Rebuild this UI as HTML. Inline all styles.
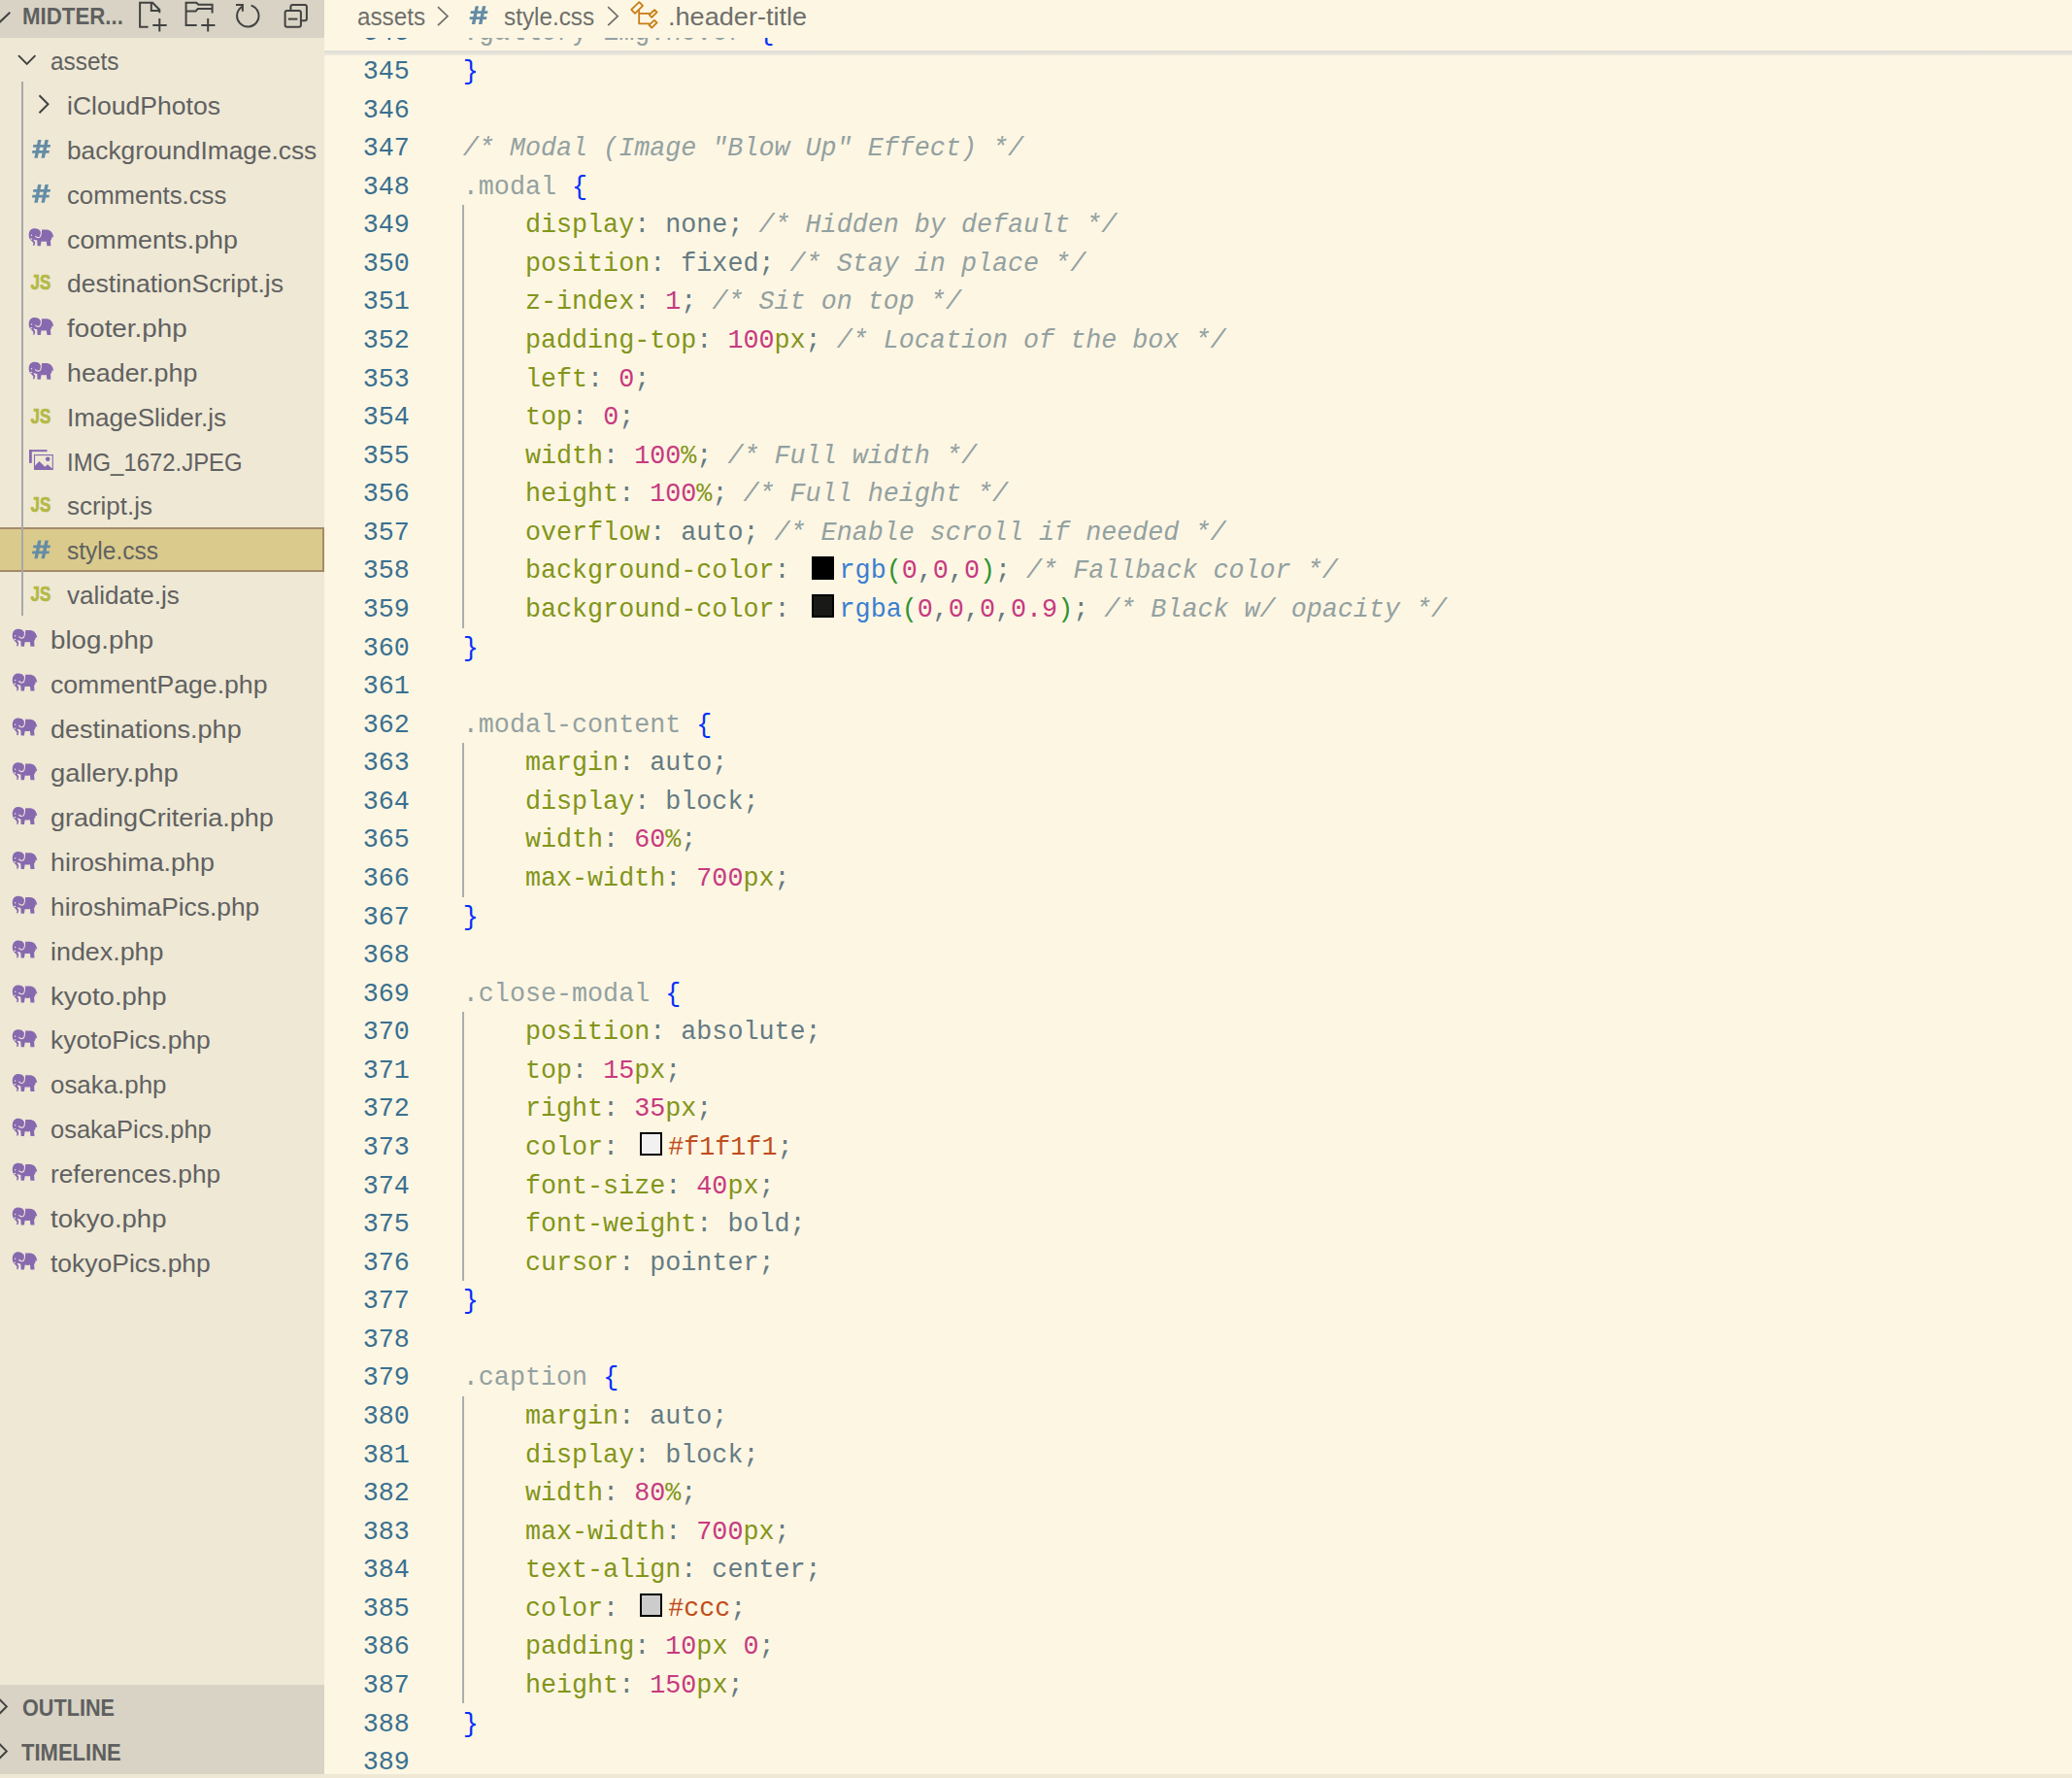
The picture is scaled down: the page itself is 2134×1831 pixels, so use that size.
<!DOCTYPE html><html><head><meta charset="utf-8"><style>

*{box-sizing:border-box}
html,body{margin:0;padding:0}
body{width:2134px;height:1831px;overflow:hidden;position:relative;background:#FDF6E3;font-family:"Liberation Sans",sans-serif}
.a{position:absolute}
.t{position:absolute;white-space:pre;transform-origin:0 0}
.cl{position:absolute;left:476.80px;white-space:pre;font-family:"Liberation Mono",monospace;font-size:26.7293px;line-height:39.57px;height:39.57px;color:#657B83}
.ln{position:absolute;left:334px;width:87.80px;white-space:pre;font-family:"Liberation Mono",monospace;font-size:26.7293px;line-height:39.57px;color:#3A7090;text-align:right}
.c{color:#93A1A1;font-style:italic}
.p{color:#82951A}
.n{color:#C73A80}
.u{color:#82951A}
.s{color:#93A1A1}
.b{color:#0431FA}
.q{color:#319331}
.f{color:#3B7FD0}
.h{color:#C04D1C}
.tg{color:#268BD2}
.sw{display:inline-block;vertical-align:top;width:23px;height:24px;border:2px solid #000;margin:3.20px 6px 0 6px}
svg{position:absolute;left:0;top:0;overflow:visible}

</style></head><body>
<div class="a" style="left:0;top:0;width:334px;height:1827px;background:#EEE8D5;overflow:hidden">
<div class="a" style="left:0;top:0;width:334px;height:38.58px;background:#D8D3C4"></div>
<div class="t" style="left:23.40px;top:-3.00px;font-size:23.50px;line-height:40px;color:#5F5F5F;font-weight:bold;transform:scaleX(0.9468);">MIDTER...</div>
<div class="a" style="left:-2px;top:543.00px;width:336px;height:46.06px;background:#DACB8C;border:2px solid #A58A69"></div>
<div class="a" style="left:22px;top:84.41px;width:2px;height:549.96px;background:#A9A9A9"></div>
<div class="t" style="left:51.50px;top:43.18px;font-size:26.50px;line-height:40px;color:#616161;transform:scaleX(0.9192);">assets</div>
<div class="t" style="left:68.60px;top:89.01px;font-size:26.50px;line-height:40px;color:#616161;transform:scaleX(1.0021);">iCloudPhotos</div>
<div class="t" style="left:68.60px;top:134.84px;font-size:26.50px;line-height:40px;color:#616161;transform:scaleX(0.9923);">backgroundImage.css</div>
<div class="t" style="left:68.60px;top:180.67px;font-size:26.50px;line-height:40px;color:#616161;transform:scaleX(0.9703);">comments.css</div>
<div class="t" style="left:68.60px;top:226.50px;font-size:26.50px;line-height:40px;color:#616161;transform:scaleX(1.0124);">comments.php</div>
<div class="t" style="left:68.60px;top:272.33px;font-size:26.50px;line-height:40px;color:#616161;transform:scaleX(1.0024);">destinationScript.js</div>
<div class="t" style="left:68.60px;top:318.16px;font-size:26.50px;line-height:40px;color:#616161;transform:scaleX(1.0490);">footer.php</div>
<div class="t" style="left:68.60px;top:363.99px;font-size:26.50px;line-height:40px;color:#616161;transform:scaleX(1.0126);">header.php</div>
<div class="t" style="left:68.60px;top:409.82px;font-size:26.50px;line-height:40px;color:#616161;transform:scaleX(0.9861);">ImageSlider.js</div>
<div class="t" style="left:68.60px;top:455.65px;font-size:26.50px;line-height:40px;color:#616161;transform:scaleX(0.9015);">IMG_1672.JPEG</div>
<div class="t" style="left:68.60px;top:501.48px;font-size:26.50px;line-height:40px;color:#616161;transform:scaleX(0.9785);">script.js</div>
<div class="t" style="left:68.60px;top:547.31px;font-size:26.50px;line-height:40px;color:#616161;transform:scaleX(0.9259);">style.css</div>
<div class="t" style="left:68.60px;top:593.14px;font-size:26.50px;line-height:40px;color:#616161;transform:scaleX(0.9822);">validate.js</div>
<div class="t" style="left:51.50px;top:638.97px;font-size:26.50px;line-height:40px;color:#616161;transform:scaleX(1.0440);">blog.php</div>
<div class="t" style="left:51.50px;top:684.80px;font-size:26.50px;line-height:40px;color:#616161;transform:scaleX(1.0046);">commentPage.php</div>
<div class="t" style="left:51.50px;top:730.63px;font-size:26.50px;line-height:40px;color:#616161;transform:scaleX(1.0189);">destinations.php</div>
<div class="t" style="left:51.50px;top:776.46px;font-size:26.50px;line-height:40px;color:#616161;transform:scaleX(1.0319);">gallery.php</div>
<div class="t" style="left:51.50px;top:822.29px;font-size:26.50px;line-height:40px;color:#616161;transform:scaleX(1.0196);">gradingCriteria.php</div>
<div class="t" style="left:51.50px;top:868.12px;font-size:26.50px;line-height:40px;color:#616161;transform:scaleX(1.0149);">hiroshima.php</div>
<div class="t" style="left:51.50px;top:913.95px;font-size:26.50px;line-height:40px;color:#616161;transform:scaleX(0.9940);">hiroshimaPics.php</div>
<div class="t" style="left:51.50px;top:959.78px;font-size:26.50px;line-height:40px;color:#616161;transform:scaleX(1.0133);">index.php</div>
<div class="t" style="left:51.50px;top:1005.61px;font-size:26.50px;line-height:40px;color:#616161;transform:scaleX(1.0402);">kyoto.php</div>
<div class="t" style="left:51.50px;top:1051.44px;font-size:26.50px;line-height:40px;color:#616161;transform:scaleX(0.9990);">kyotoPics.php</div>
<div class="t" style="left:51.50px;top:1097.27px;font-size:26.50px;line-height:40px;color:#616161;transform:scaleX(0.9771);">osaka.php</div>
<div class="t" style="left:51.50px;top:1143.10px;font-size:26.50px;line-height:40px;color:#616161;transform:scaleX(0.9618);">osakaPics.php</div>
<div class="t" style="left:51.50px;top:1188.93px;font-size:26.50px;line-height:40px;color:#616161;transform:scaleX(0.9906);">references.php</div>
<div class="t" style="left:51.50px;top:1234.76px;font-size:26.50px;line-height:40px;color:#616161;transform:scaleX(1.0402);">tokyo.php</div>
<div class="t" style="left:51.50px;top:1280.59px;font-size:26.50px;line-height:40px;color:#616161;transform:scaleX(0.9990);">tokyoPics.php</div>
<svg width="334" height="1827"><path d="M19 57.1 L27.7 65.9 L36.4 57.1" fill="none" stroke="#424242" stroke-width="2"/><path d="M40.5 98.3 L49.5 107.3 L40.5 116.3" fill="none" stroke="#424242" stroke-width="2"/><g fill="#648CA5" transform="translate(28.00 140.00)"><path d="M11.1 4.05 L14.5 4.05 L10.8 22.8 L7.3 22.8 Z"/><path d="M18.4 4.05 L21.9 4.05 L17.9 22.8 L14.5 22.8 Z"/><path d="M6.4 9.1 L24 9.1 L23.6 11.8 L6 11.8 Z"/><path d="M5.4 15 L22.9 15 L22.5 17.7 L5 17.7 Z"/></g><g fill="#648CA5" transform="translate(28.00 185.83)"><path d="M11.1 4.05 L14.5 4.05 L10.8 22.8 L7.3 22.8 Z"/><path d="M18.4 4.05 L21.9 4.05 L17.9 22.8 L14.5 22.8 Z"/><path d="M6.4 9.1 L24 9.1 L23.6 11.8 L6 11.8 Z"/><path d="M5.4 15 L22.9 15 L22.5 17.7 L5 17.7 Z"/></g><g transform="translate(24.00 228.31)"><path fill="#8769AF" d="M6.6 17.8 C5.2 15 5.4 10.2 7.8 8.3 C9.6 6.8 12.6 6.6 14.8 7.5 C16.3 8.1 17.2 9.2 17.6 10.5 L18.3 8.2 L24 8.2 C28.2 8.4 30.3 11.4 31.2 15.8 L30.4 16 L29.8 15 C29.6 17 28.8 18.5 28 19.5 L28.4 25 L24.4 25 L23.8 20.2 C22.5 20.6 20.4 20.6 18.6 20.2 L17.8 25 L14.6 25 L14.2 19.3 C12.5 18.8 11 18.6 10.2 18.4 L12.1 21 C12.3 22.6 11.8 24 11.1 24.8 L9.8 24.4 C10.4 23.5 10.6 22.6 10.3 21.8 L6.6 17.8 Z"/><path fill="none" stroke="#EEE8D5" stroke-width="1.1" d="M12.4 14.6 C13 16.4 15.5 16.8 17 15.8 C18.2 15 18.5 13 18.5 8"/><circle cx="8.5" cy="13.9" r="0.75" fill="#EEE8D5"/><ellipse cx="8.3" cy="17.7" rx="1" ry="0.7" fill="#EEE8D5"/></g><text x="31.6" y="298.0" font-family="Liberation Sans" font-weight="bold" font-size="22" fill="#B4B946" stroke="#B4B946" stroke-width="0.7" textLength="20.7" lengthAdjust="spacingAndGlyphs">JS</text><g transform="translate(24.00 319.98)"><path fill="#8769AF" d="M6.6 17.8 C5.2 15 5.4 10.2 7.8 8.3 C9.6 6.8 12.6 6.6 14.8 7.5 C16.3 8.1 17.2 9.2 17.6 10.5 L18.3 8.2 L24 8.2 C28.2 8.4 30.3 11.4 31.2 15.8 L30.4 16 L29.8 15 C29.6 17 28.8 18.5 28 19.5 L28.4 25 L24.4 25 L23.8 20.2 C22.5 20.6 20.4 20.6 18.6 20.2 L17.8 25 L14.6 25 L14.2 19.3 C12.5 18.8 11 18.6 10.2 18.4 L12.1 21 C12.3 22.6 11.8 24 11.1 24.8 L9.8 24.4 C10.4 23.5 10.6 22.6 10.3 21.8 L6.6 17.8 Z"/><path fill="none" stroke="#EEE8D5" stroke-width="1.1" d="M12.4 14.6 C13 16.4 15.5 16.8 17 15.8 C18.2 15 18.5 13 18.5 8"/><circle cx="8.5" cy="13.9" r="0.75" fill="#EEE8D5"/><ellipse cx="8.3" cy="17.7" rx="1" ry="0.7" fill="#EEE8D5"/></g><g transform="translate(24.00 365.81)"><path fill="#8769AF" d="M6.6 17.8 C5.2 15 5.4 10.2 7.8 8.3 C9.6 6.8 12.6 6.6 14.8 7.5 C16.3 8.1 17.2 9.2 17.6 10.5 L18.3 8.2 L24 8.2 C28.2 8.4 30.3 11.4 31.2 15.8 L30.4 16 L29.8 15 C29.6 17 28.8 18.5 28 19.5 L28.4 25 L24.4 25 L23.8 20.2 C22.5 20.6 20.4 20.6 18.6 20.2 L17.8 25 L14.6 25 L14.2 19.3 C12.5 18.8 11 18.6 10.2 18.4 L12.1 21 C12.3 22.6 11.8 24 11.1 24.8 L9.8 24.4 C10.4 23.5 10.6 22.6 10.3 21.8 L6.6 17.8 Z"/><path fill="none" stroke="#EEE8D5" stroke-width="1.1" d="M12.4 14.6 C13 16.4 15.5 16.8 17 15.8 C18.2 15 18.5 13 18.5 8"/><circle cx="8.5" cy="13.9" r="0.75" fill="#EEE8D5"/><ellipse cx="8.3" cy="17.7" rx="1" ry="0.7" fill="#EEE8D5"/></g><text x="31.6" y="435.5" font-family="Liberation Sans" font-weight="bold" font-size="22" fill="#B4B946" stroke="#B4B946" stroke-width="0.7" textLength="20.7" lengthAdjust="spacingAndGlyphs">JS</text><g transform="translate(26.00 458.16)" fill="#8769AF"><rect x="4" y="5" width="18.5" height="2"/><rect x="4" y="5" width="2.8" height="13.7"/><rect x="9.5" y="10.4" width="18.8" height="14.8" fill="none" stroke="#8769AF" stroke-width="1.1"/><path d="M9.5 22.1 L14.4 16.9 L20.3 22.7 L23 20 L28.3 24.8 L28.3 25.7 L9.5 25.7 Z"/><circle cx="23.2" cy="14.6" r="2.3"/></g><text x="31.6" y="527.2" font-family="Liberation Sans" font-weight="bold" font-size="22" fill="#B4B946" stroke="#B4B946" stroke-width="0.7" textLength="20.7" lengthAdjust="spacingAndGlyphs">JS</text><g fill="#648CA5" transform="translate(28.00 552.48)"><path d="M11.1 4.05 L14.5 4.05 L10.8 22.8 L7.3 22.8 Z"/><path d="M18.4 4.05 L21.9 4.05 L17.9 22.8 L14.5 22.8 Z"/><path d="M6.4 9.1 L24 9.1 L23.6 11.8 L6 11.8 Z"/><path d="M5.4 15 L22.9 15 L22.5 17.7 L5 17.7 Z"/></g><text x="31.6" y="618.9" font-family="Liberation Sans" font-weight="bold" font-size="22" fill="#B4B946" stroke="#B4B946" stroke-width="0.7" textLength="20.7" lengthAdjust="spacingAndGlyphs">JS</text><g transform="translate(7.10 640.78)"><path fill="#8769AF" d="M6.6 17.8 C5.2 15 5.4 10.2 7.8 8.3 C9.6 6.8 12.6 6.6 14.8 7.5 C16.3 8.1 17.2 9.2 17.6 10.5 L18.3 8.2 L24 8.2 C28.2 8.4 30.3 11.4 31.2 15.8 L30.4 16 L29.8 15 C29.6 17 28.8 18.5 28 19.5 L28.4 25 L24.4 25 L23.8 20.2 C22.5 20.6 20.4 20.6 18.6 20.2 L17.8 25 L14.6 25 L14.2 19.3 C12.5 18.8 11 18.6 10.2 18.4 L12.1 21 C12.3 22.6 11.8 24 11.1 24.8 L9.8 24.4 C10.4 23.5 10.6 22.6 10.3 21.8 L6.6 17.8 Z"/><path fill="none" stroke="#EEE8D5" stroke-width="1.1" d="M12.4 14.6 C13 16.4 15.5 16.8 17 15.8 C18.2 15 18.5 13 18.5 8"/><circle cx="8.5" cy="13.9" r="0.75" fill="#EEE8D5"/><ellipse cx="8.3" cy="17.7" rx="1" ry="0.7" fill="#EEE8D5"/></g><g transform="translate(7.10 686.62)"><path fill="#8769AF" d="M6.6 17.8 C5.2 15 5.4 10.2 7.8 8.3 C9.6 6.8 12.6 6.6 14.8 7.5 C16.3 8.1 17.2 9.2 17.6 10.5 L18.3 8.2 L24 8.2 C28.2 8.4 30.3 11.4 31.2 15.8 L30.4 16 L29.8 15 C29.6 17 28.8 18.5 28 19.5 L28.4 25 L24.4 25 L23.8 20.2 C22.5 20.6 20.4 20.6 18.6 20.2 L17.8 25 L14.6 25 L14.2 19.3 C12.5 18.8 11 18.6 10.2 18.4 L12.1 21 C12.3 22.6 11.8 24 11.1 24.8 L9.8 24.4 C10.4 23.5 10.6 22.6 10.3 21.8 L6.6 17.8 Z"/><path fill="none" stroke="#EEE8D5" stroke-width="1.1" d="M12.4 14.6 C13 16.4 15.5 16.8 17 15.8 C18.2 15 18.5 13 18.5 8"/><circle cx="8.5" cy="13.9" r="0.75" fill="#EEE8D5"/><ellipse cx="8.3" cy="17.7" rx="1" ry="0.7" fill="#EEE8D5"/></g><g transform="translate(7.10 732.44)"><path fill="#8769AF" d="M6.6 17.8 C5.2 15 5.4 10.2 7.8 8.3 C9.6 6.8 12.6 6.6 14.8 7.5 C16.3 8.1 17.2 9.2 17.6 10.5 L18.3 8.2 L24 8.2 C28.2 8.4 30.3 11.4 31.2 15.8 L30.4 16 L29.8 15 C29.6 17 28.8 18.5 28 19.5 L28.4 25 L24.4 25 L23.8 20.2 C22.5 20.6 20.4 20.6 18.6 20.2 L17.8 25 L14.6 25 L14.2 19.3 C12.5 18.8 11 18.6 10.2 18.4 L12.1 21 C12.3 22.6 11.8 24 11.1 24.8 L9.8 24.4 C10.4 23.5 10.6 22.6 10.3 21.8 L6.6 17.8 Z"/><path fill="none" stroke="#EEE8D5" stroke-width="1.1" d="M12.4 14.6 C13 16.4 15.5 16.8 17 15.8 C18.2 15 18.5 13 18.5 8"/><circle cx="8.5" cy="13.9" r="0.75" fill="#EEE8D5"/><ellipse cx="8.3" cy="17.7" rx="1" ry="0.7" fill="#EEE8D5"/></g><g transform="translate(7.10 778.27)"><path fill="#8769AF" d="M6.6 17.8 C5.2 15 5.4 10.2 7.8 8.3 C9.6 6.8 12.6 6.6 14.8 7.5 C16.3 8.1 17.2 9.2 17.6 10.5 L18.3 8.2 L24 8.2 C28.2 8.4 30.3 11.4 31.2 15.8 L30.4 16 L29.8 15 C29.6 17 28.8 18.5 28 19.5 L28.4 25 L24.4 25 L23.8 20.2 C22.5 20.6 20.4 20.6 18.6 20.2 L17.8 25 L14.6 25 L14.2 19.3 C12.5 18.8 11 18.6 10.2 18.4 L12.1 21 C12.3 22.6 11.8 24 11.1 24.8 L9.8 24.4 C10.4 23.5 10.6 22.6 10.3 21.8 L6.6 17.8 Z"/><path fill="none" stroke="#EEE8D5" stroke-width="1.1" d="M12.4 14.6 C13 16.4 15.5 16.8 17 15.8 C18.2 15 18.5 13 18.5 8"/><circle cx="8.5" cy="13.9" r="0.75" fill="#EEE8D5"/><ellipse cx="8.3" cy="17.7" rx="1" ry="0.7" fill="#EEE8D5"/></g><g transform="translate(7.10 824.11)"><path fill="#8769AF" d="M6.6 17.8 C5.2 15 5.4 10.2 7.8 8.3 C9.6 6.8 12.6 6.6 14.8 7.5 C16.3 8.1 17.2 9.2 17.6 10.5 L18.3 8.2 L24 8.2 C28.2 8.4 30.3 11.4 31.2 15.8 L30.4 16 L29.8 15 C29.6 17 28.8 18.5 28 19.5 L28.4 25 L24.4 25 L23.8 20.2 C22.5 20.6 20.4 20.6 18.6 20.2 L17.8 25 L14.6 25 L14.2 19.3 C12.5 18.8 11 18.6 10.2 18.4 L12.1 21 C12.3 22.6 11.8 24 11.1 24.8 L9.8 24.4 C10.4 23.5 10.6 22.6 10.3 21.8 L6.6 17.8 Z"/><path fill="none" stroke="#EEE8D5" stroke-width="1.1" d="M12.4 14.6 C13 16.4 15.5 16.8 17 15.8 C18.2 15 18.5 13 18.5 8"/><circle cx="8.5" cy="13.9" r="0.75" fill="#EEE8D5"/><ellipse cx="8.3" cy="17.7" rx="1" ry="0.7" fill="#EEE8D5"/></g><g transform="translate(7.10 869.93)"><path fill="#8769AF" d="M6.6 17.8 C5.2 15 5.4 10.2 7.8 8.3 C9.6 6.8 12.6 6.6 14.8 7.5 C16.3 8.1 17.2 9.2 17.6 10.5 L18.3 8.2 L24 8.2 C28.2 8.4 30.3 11.4 31.2 15.8 L30.4 16 L29.8 15 C29.6 17 28.8 18.5 28 19.5 L28.4 25 L24.4 25 L23.8 20.2 C22.5 20.6 20.4 20.6 18.6 20.2 L17.8 25 L14.6 25 L14.2 19.3 C12.5 18.8 11 18.6 10.2 18.4 L12.1 21 C12.3 22.6 11.8 24 11.1 24.8 L9.8 24.4 C10.4 23.5 10.6 22.6 10.3 21.8 L6.6 17.8 Z"/><path fill="none" stroke="#EEE8D5" stroke-width="1.1" d="M12.4 14.6 C13 16.4 15.5 16.8 17 15.8 C18.2 15 18.5 13 18.5 8"/><circle cx="8.5" cy="13.9" r="0.75" fill="#EEE8D5"/><ellipse cx="8.3" cy="17.7" rx="1" ry="0.7" fill="#EEE8D5"/></g><g transform="translate(7.10 915.76)"><path fill="#8769AF" d="M6.6 17.8 C5.2 15 5.4 10.2 7.8 8.3 C9.6 6.8 12.6 6.6 14.8 7.5 C16.3 8.1 17.2 9.2 17.6 10.5 L18.3 8.2 L24 8.2 C28.2 8.4 30.3 11.4 31.2 15.8 L30.4 16 L29.8 15 C29.6 17 28.8 18.5 28 19.5 L28.4 25 L24.4 25 L23.8 20.2 C22.5 20.6 20.4 20.6 18.6 20.2 L17.8 25 L14.6 25 L14.2 19.3 C12.5 18.8 11 18.6 10.2 18.4 L12.1 21 C12.3 22.6 11.8 24 11.1 24.8 L9.8 24.4 C10.4 23.5 10.6 22.6 10.3 21.8 L6.6 17.8 Z"/><path fill="none" stroke="#EEE8D5" stroke-width="1.1" d="M12.4 14.6 C13 16.4 15.5 16.8 17 15.8 C18.2 15 18.5 13 18.5 8"/><circle cx="8.5" cy="13.9" r="0.75" fill="#EEE8D5"/><ellipse cx="8.3" cy="17.7" rx="1" ry="0.7" fill="#EEE8D5"/></g><g transform="translate(7.10 961.59)"><path fill="#8769AF" d="M6.6 17.8 C5.2 15 5.4 10.2 7.8 8.3 C9.6 6.8 12.6 6.6 14.8 7.5 C16.3 8.1 17.2 9.2 17.6 10.5 L18.3 8.2 L24 8.2 C28.2 8.4 30.3 11.4 31.2 15.8 L30.4 16 L29.8 15 C29.6 17 28.8 18.5 28 19.5 L28.4 25 L24.4 25 L23.8 20.2 C22.5 20.6 20.4 20.6 18.6 20.2 L17.8 25 L14.6 25 L14.2 19.3 C12.5 18.8 11 18.6 10.2 18.4 L12.1 21 C12.3 22.6 11.8 24 11.1 24.8 L9.8 24.4 C10.4 23.5 10.6 22.6 10.3 21.8 L6.6 17.8 Z"/><path fill="none" stroke="#EEE8D5" stroke-width="1.1" d="M12.4 14.6 C13 16.4 15.5 16.8 17 15.8 C18.2 15 18.5 13 18.5 8"/><circle cx="8.5" cy="13.9" r="0.75" fill="#EEE8D5"/><ellipse cx="8.3" cy="17.7" rx="1" ry="0.7" fill="#EEE8D5"/></g><g transform="translate(7.10 1007.42)"><path fill="#8769AF" d="M6.6 17.8 C5.2 15 5.4 10.2 7.8 8.3 C9.6 6.8 12.6 6.6 14.8 7.5 C16.3 8.1 17.2 9.2 17.6 10.5 L18.3 8.2 L24 8.2 C28.2 8.4 30.3 11.4 31.2 15.8 L30.4 16 L29.8 15 C29.6 17 28.8 18.5 28 19.5 L28.4 25 L24.4 25 L23.8 20.2 C22.5 20.6 20.4 20.6 18.6 20.2 L17.8 25 L14.6 25 L14.2 19.3 C12.5 18.8 11 18.6 10.2 18.4 L12.1 21 C12.3 22.6 11.8 24 11.1 24.8 L9.8 24.4 C10.4 23.5 10.6 22.6 10.3 21.8 L6.6 17.8 Z"/><path fill="none" stroke="#EEE8D5" stroke-width="1.1" d="M12.4 14.6 C13 16.4 15.5 16.8 17 15.8 C18.2 15 18.5 13 18.5 8"/><circle cx="8.5" cy="13.9" r="0.75" fill="#EEE8D5"/><ellipse cx="8.3" cy="17.7" rx="1" ry="0.7" fill="#EEE8D5"/></g><g transform="translate(7.10 1053.25)"><path fill="#8769AF" d="M6.6 17.8 C5.2 15 5.4 10.2 7.8 8.3 C9.6 6.8 12.6 6.6 14.8 7.5 C16.3 8.1 17.2 9.2 17.6 10.5 L18.3 8.2 L24 8.2 C28.2 8.4 30.3 11.4 31.2 15.8 L30.4 16 L29.8 15 C29.6 17 28.8 18.5 28 19.5 L28.4 25 L24.4 25 L23.8 20.2 C22.5 20.6 20.4 20.6 18.6 20.2 L17.8 25 L14.6 25 L14.2 19.3 C12.5 18.8 11 18.6 10.2 18.4 L12.1 21 C12.3 22.6 11.8 24 11.1 24.8 L9.8 24.4 C10.4 23.5 10.6 22.6 10.3 21.8 L6.6 17.8 Z"/><path fill="none" stroke="#EEE8D5" stroke-width="1.1" d="M12.4 14.6 C13 16.4 15.5 16.8 17 15.8 C18.2 15 18.5 13 18.5 8"/><circle cx="8.5" cy="13.9" r="0.75" fill="#EEE8D5"/><ellipse cx="8.3" cy="17.7" rx="1" ry="0.7" fill="#EEE8D5"/></g><g transform="translate(7.10 1099.08)"><path fill="#8769AF" d="M6.6 17.8 C5.2 15 5.4 10.2 7.8 8.3 C9.6 6.8 12.6 6.6 14.8 7.5 C16.3 8.1 17.2 9.2 17.6 10.5 L18.3 8.2 L24 8.2 C28.2 8.4 30.3 11.4 31.2 15.8 L30.4 16 L29.8 15 C29.6 17 28.8 18.5 28 19.5 L28.4 25 L24.4 25 L23.8 20.2 C22.5 20.6 20.4 20.6 18.6 20.2 L17.8 25 L14.6 25 L14.2 19.3 C12.5 18.8 11 18.6 10.2 18.4 L12.1 21 C12.3 22.6 11.8 24 11.1 24.8 L9.8 24.4 C10.4 23.5 10.6 22.6 10.3 21.8 L6.6 17.8 Z"/><path fill="none" stroke="#EEE8D5" stroke-width="1.1" d="M12.4 14.6 C13 16.4 15.5 16.8 17 15.8 C18.2 15 18.5 13 18.5 8"/><circle cx="8.5" cy="13.9" r="0.75" fill="#EEE8D5"/><ellipse cx="8.3" cy="17.7" rx="1" ry="0.7" fill="#EEE8D5"/></g><g transform="translate(7.10 1144.91)"><path fill="#8769AF" d="M6.6 17.8 C5.2 15 5.4 10.2 7.8 8.3 C9.6 6.8 12.6 6.6 14.8 7.5 C16.3 8.1 17.2 9.2 17.6 10.5 L18.3 8.2 L24 8.2 C28.2 8.4 30.3 11.4 31.2 15.8 L30.4 16 L29.8 15 C29.6 17 28.8 18.5 28 19.5 L28.4 25 L24.4 25 L23.8 20.2 C22.5 20.6 20.4 20.6 18.6 20.2 L17.8 25 L14.6 25 L14.2 19.3 C12.5 18.8 11 18.6 10.2 18.4 L12.1 21 C12.3 22.6 11.8 24 11.1 24.8 L9.8 24.4 C10.4 23.5 10.6 22.6 10.3 21.8 L6.6 17.8 Z"/><path fill="none" stroke="#EEE8D5" stroke-width="1.1" d="M12.4 14.6 C13 16.4 15.5 16.8 17 15.8 C18.2 15 18.5 13 18.5 8"/><circle cx="8.5" cy="13.9" r="0.75" fill="#EEE8D5"/><ellipse cx="8.3" cy="17.7" rx="1" ry="0.7" fill="#EEE8D5"/></g><g transform="translate(7.10 1190.74)"><path fill="#8769AF" d="M6.6 17.8 C5.2 15 5.4 10.2 7.8 8.3 C9.6 6.8 12.6 6.6 14.8 7.5 C16.3 8.1 17.2 9.2 17.6 10.5 L18.3 8.2 L24 8.2 C28.2 8.4 30.3 11.4 31.2 15.8 L30.4 16 L29.8 15 C29.6 17 28.8 18.5 28 19.5 L28.4 25 L24.4 25 L23.8 20.2 C22.5 20.6 20.4 20.6 18.6 20.2 L17.8 25 L14.6 25 L14.2 19.3 C12.5 18.8 11 18.6 10.2 18.4 L12.1 21 C12.3 22.6 11.8 24 11.1 24.8 L9.8 24.4 C10.4 23.5 10.6 22.6 10.3 21.8 L6.6 17.8 Z"/><path fill="none" stroke="#EEE8D5" stroke-width="1.1" d="M12.4 14.6 C13 16.4 15.5 16.8 17 15.8 C18.2 15 18.5 13 18.5 8"/><circle cx="8.5" cy="13.9" r="0.75" fill="#EEE8D5"/><ellipse cx="8.3" cy="17.7" rx="1" ry="0.7" fill="#EEE8D5"/></g><g transform="translate(7.10 1236.57)"><path fill="#8769AF" d="M6.6 17.8 C5.2 15 5.4 10.2 7.8 8.3 C9.6 6.8 12.6 6.6 14.8 7.5 C16.3 8.1 17.2 9.2 17.6 10.5 L18.3 8.2 L24 8.2 C28.2 8.4 30.3 11.4 31.2 15.8 L30.4 16 L29.8 15 C29.6 17 28.8 18.5 28 19.5 L28.4 25 L24.4 25 L23.8 20.2 C22.5 20.6 20.4 20.6 18.6 20.2 L17.8 25 L14.6 25 L14.2 19.3 C12.5 18.8 11 18.6 10.2 18.4 L12.1 21 C12.3 22.6 11.8 24 11.1 24.8 L9.8 24.4 C10.4 23.5 10.6 22.6 10.3 21.8 L6.6 17.8 Z"/><path fill="none" stroke="#EEE8D5" stroke-width="1.1" d="M12.4 14.6 C13 16.4 15.5 16.8 17 15.8 C18.2 15 18.5 13 18.5 8"/><circle cx="8.5" cy="13.9" r="0.75" fill="#EEE8D5"/><ellipse cx="8.3" cy="17.7" rx="1" ry="0.7" fill="#EEE8D5"/></g><g transform="translate(7.10 1282.40)"><path fill="#8769AF" d="M6.6 17.8 C5.2 15 5.4 10.2 7.8 8.3 C9.6 6.8 12.6 6.6 14.8 7.5 C16.3 8.1 17.2 9.2 17.6 10.5 L18.3 8.2 L24 8.2 C28.2 8.4 30.3 11.4 31.2 15.8 L30.4 16 L29.8 15 C29.6 17 28.8 18.5 28 19.5 L28.4 25 L24.4 25 L23.8 20.2 C22.5 20.6 20.4 20.6 18.6 20.2 L17.8 25 L14.6 25 L14.2 19.3 C12.5 18.8 11 18.6 10.2 18.4 L12.1 21 C12.3 22.6 11.8 24 11.1 24.8 L9.8 24.4 C10.4 23.5 10.6 22.6 10.3 21.8 L6.6 17.8 Z"/><path fill="none" stroke="#EEE8D5" stroke-width="1.1" d="M12.4 14.6 C13 16.4 15.5 16.8 17 15.8 C18.2 15 18.5 13 18.5 8"/><circle cx="8.5" cy="13.9" r="0.75" fill="#EEE8D5"/><ellipse cx="8.3" cy="17.7" rx="1" ry="0.7" fill="#EEE8D5"/></g></svg>
<svg width="334" height="40"><g fill="none" stroke="#424242" stroke-width="2" stroke-linejoin="miter">
<path d="M10.3 12.7 L0 22.5 L-10 12.7"/>
<path d="M152.6 27.8 L144.1 27.8 L144.1 2.8 L157.1 2.8 L164.3 10 L164.3 13.2"/>
<path d="M155.8 2.8 L155.8 11.1 L164.3 11.1"/>
<path d="M164.3 19.1 L164.3 32.6 M157.3 26 L171.7 26"/>
<path d="M202.7 26.1 L191.6 26.1 L191.6 2.8 L202.3 2.8 L204.3 4.8 L218.6 4.8 L218.6 13.5"/>
<path d="M191.6 11.5 L201.6 11.5 L203.8 9.1 L218.6 9.1"/>
<path d="M214.2 19.1 L214.2 32.6 M207.3 26 L221.4 26"/>
<path d="M258.6 5.6 A11.2 11.2 0 1 1 249.7 6.6"/>
<path d="M243 4.9 L249.9 4.9 L249.9 11.7"/>
<path d="M299.4 11.1 L299.4 7 Q299.4 5 301.4 5 L313.9 5 Q315.9 5 315.9 7 L315.9 19.3 Q315.9 21.3 313.9 21.3 L309.9 21.3"/>
<rect x="293.6" y="11.1" width="16.3" height="16.7" rx="2"/>
<path d="M296.8 19.6 L306.4 19.6"/>
</g></svg>
<div class="a" style="left:0;top:1735.1px;width:334px;height:91.6px;background:#D8D3C4"></div>
<div class="t" style="left:22.60px;top:1739.20px;font-size:23.00px;line-height:40px;color:#5F5F5F;font-weight:bold;transform:scaleX(0.9409);">OUTLINE</div>
<div class="t" style="left:22.30px;top:1785.10px;font-size:23.00px;line-height:40px;color:#5F5F5F;font-weight:bold;transform:scaleX(0.9572);">TIMELINE</div>
<svg width="334" height="1827"><g fill="none" stroke="#424242" stroke-width="2"><path d="M-0.5 1750 L6.8 1757.4 L-0.5 1764.8"/><path d="M-0.5 1796 L6.8 1803.4 L-0.5 1810.8"/></g></svg>
</div>
<div class="a" style="left:334px;top:0;width:1800px;height:1827px;overflow:hidden">
</div>
<div class="a" style="left:0;top:0;width:2134px;height:1827px;overflow:hidden">
<div class="a" style="left:476px;top:211.28px;width:2px;height:435.27px;background:#A9B0AA"></div>
<div class="a" style="left:476px;top:765.26px;width:2px;height:158.28px;background:#A9B0AA"></div>
<div class="a" style="left:476px;top:1042.25px;width:2px;height:276.99px;background:#A9B0AA"></div>
<div class="a" style="left:476px;top:1437.95px;width:2px;height:316.56px;background:#A9B0AA"></div>
<div class="ln" style="top:55.00px">345</div>
<div class="cl" style="top:55.00px"><span class="b">}</span></div>
<div class="ln" style="top:94.57px">346</div>
<div class="ln" style="top:134.14px">347</div>
<div class="cl" style="top:134.14px"><span class="c">/* Modal (Image &quot;Blow Up&quot; Effect) */</span></div>
<div class="ln" style="top:173.71px">348</div>
<div class="cl" style="top:173.71px"><span class="s">.modal</span> <span class="b">{</span></div>
<div class="ln" style="top:213.28px">349</div>
<div class="cl" style="top:213.28px">    <span class="p">display</span>: none; <span class="c">/* Hidden by default */</span></div>
<div class="ln" style="top:252.85px">350</div>
<div class="cl" style="top:252.85px">    <span class="p">position</span>: fixed; <span class="c">/* Stay in place */</span></div>
<div class="ln" style="top:292.42px">351</div>
<div class="cl" style="top:292.42px">    <span class="p">z-index</span>: <span class="n">1</span>; <span class="c">/* Sit on top */</span></div>
<div class="ln" style="top:331.99px">352</div>
<div class="cl" style="top:331.99px">    <span class="p">padding-top</span>: <span class="n">100</span><span class="u">px</span>; <span class="c">/* Location of the box */</span></div>
<div class="ln" style="top:371.56px">353</div>
<div class="cl" style="top:371.56px">    <span class="p">left</span>: <span class="n">0</span>;</div>
<div class="ln" style="top:411.13px">354</div>
<div class="cl" style="top:411.13px">    <span class="p">top</span>: <span class="n">0</span>;</div>
<div class="ln" style="top:450.70px">355</div>
<div class="cl" style="top:450.70px">    <span class="p">width</span>: <span class="n">100</span><span class="u">%</span>; <span class="c">/* Full width */</span></div>
<div class="ln" style="top:490.27px">356</div>
<div class="cl" style="top:490.27px">    <span class="p">height</span>: <span class="n">100</span><span class="u">%</span>; <span class="c">/* Full height */</span></div>
<div class="ln" style="top:529.84px">357</div>
<div class="cl" style="top:529.84px">    <span class="p">overflow</span>: auto; <span class="c">/* Enable scroll if needed */</span></div>
<div class="ln" style="top:569.41px">358</div>
<div class="cl" style="top:569.41px">    <span class="p">background-color</span>: <span class="sw" style="background:#000"></span><span class="f">rgb</span><span class="q">(</span><span class="n">0</span>,<span class="n">0</span>,<span class="n">0</span><span class="q">)</span>; <span class="c">/* Fallback color */</span></div>
<div class="ln" style="top:608.98px">359</div>
<div class="cl" style="top:608.98px">    <span class="p">background-color</span>: <span class="sw" style="background:rgb(25,25,23)"></span><span class="f">rgba</span><span class="q">(</span><span class="n">0</span>,<span class="n">0</span>,<span class="n">0</span>,<span class="n">0.9</span><span class="q">)</span>; <span class="c">/* Black w/ opacity */</span></div>
<div class="ln" style="top:648.55px">360</div>
<div class="cl" style="top:648.55px"><span class="b">}</span></div>
<div class="ln" style="top:688.12px">361</div>
<div class="ln" style="top:727.69px">362</div>
<div class="cl" style="top:727.69px"><span class="s">.modal-content</span> <span class="b">{</span></div>
<div class="ln" style="top:767.26px">363</div>
<div class="cl" style="top:767.26px">    <span class="p">margin</span>: auto;</div>
<div class="ln" style="top:806.83px">364</div>
<div class="cl" style="top:806.83px">    <span class="p">display</span>: block;</div>
<div class="ln" style="top:846.40px">365</div>
<div class="cl" style="top:846.40px">    <span class="p">width</span>: <span class="n">60</span><span class="u">%</span>;</div>
<div class="ln" style="top:885.97px">366</div>
<div class="cl" style="top:885.97px">    <span class="p">max-width</span>: <span class="n">700</span><span class="u">px</span>;</div>
<div class="ln" style="top:925.54px">367</div>
<div class="cl" style="top:925.54px"><span class="b">}</span></div>
<div class="ln" style="top:965.11px">368</div>
<div class="ln" style="top:1004.68px">369</div>
<div class="cl" style="top:1004.68px"><span class="s">.close-modal</span> <span class="b">{</span></div>
<div class="ln" style="top:1044.25px">370</div>
<div class="cl" style="top:1044.25px">    <span class="p">position</span>: absolute;</div>
<div class="ln" style="top:1083.82px">371</div>
<div class="cl" style="top:1083.82px">    <span class="p">top</span>: <span class="n">15</span><span class="u">px</span>;</div>
<div class="ln" style="top:1123.39px">372</div>
<div class="cl" style="top:1123.39px">    <span class="p">right</span>: <span class="n">35</span><span class="u">px</span>;</div>
<div class="ln" style="top:1162.96px">373</div>
<div class="cl" style="top:1162.96px">    <span class="p">color</span>: <span class="sw" style="background:#f1f1f1"></span><span class="h">#f1f1f1</span>;</div>
<div class="ln" style="top:1202.53px">374</div>
<div class="cl" style="top:1202.53px">    <span class="p">font-size</span>: <span class="n">40</span><span class="u">px</span>;</div>
<div class="ln" style="top:1242.10px">375</div>
<div class="cl" style="top:1242.10px">    <span class="p">font-weight</span>: bold;</div>
<div class="ln" style="top:1281.67px">376</div>
<div class="cl" style="top:1281.67px">    <span class="p">cursor</span>: pointer;</div>
<div class="ln" style="top:1321.24px">377</div>
<div class="cl" style="top:1321.24px"><span class="b">}</span></div>
<div class="ln" style="top:1360.81px">378</div>
<div class="ln" style="top:1400.38px">379</div>
<div class="cl" style="top:1400.38px"><span class="s">.caption</span> <span class="b">{</span></div>
<div class="ln" style="top:1439.95px">380</div>
<div class="cl" style="top:1439.95px">    <span class="p">margin</span>: auto;</div>
<div class="ln" style="top:1479.52px">381</div>
<div class="cl" style="top:1479.52px">    <span class="p">display</span>: block;</div>
<div class="ln" style="top:1519.09px">382</div>
<div class="cl" style="top:1519.09px">    <span class="p">width</span>: <span class="n">80</span><span class="u">%</span>;</div>
<div class="ln" style="top:1558.66px">383</div>
<div class="cl" style="top:1558.66px">    <span class="p">max-width</span>: <span class="n">700</span><span class="u">px</span>;</div>
<div class="ln" style="top:1598.23px">384</div>
<div class="cl" style="top:1598.23px">    <span class="p">text-align</span>: center;</div>
<div class="ln" style="top:1637.80px">385</div>
<div class="cl" style="top:1637.80px">    <span class="p">color</span>: <span class="sw" style="background:#ccc"></span><span class="h">#ccc</span>;</div>
<div class="ln" style="top:1677.37px">386</div>
<div class="cl" style="top:1677.37px">    <span class="p">padding</span>: <span class="n">10</span><span class="u">px</span> <span class="n">0</span>;</div>
<div class="ln" style="top:1716.94px">387</div>
<div class="cl" style="top:1716.94px">    <span class="p">height</span>: <span class="n">150</span><span class="u">px</span>;</div>
<div class="ln" style="top:1756.51px">388</div>
<div class="cl" style="top:1756.51px"><span class="b">}</span></div>
<div class="ln" style="top:1796.08px">389</div>
</div>
<div class="a" style="left:334px;top:0;width:1800px;height:53px;background:#FDF6E3;overflow:hidden">
<div class="ln" style="left:0;top:15.43px">343</div>
<div class="cl" style="left:142.80px;top:15.43px"><span class="s">.gallery</span> <span class="s">img</span><span class="s">:hover</span> <span class="b">{</span></div>
</div>
<div class="a" style="left:334px;top:52px;width:1800px;height:6px;background:linear-gradient(rgba(212,212,210,0.75) 0%,rgba(212,212,210,0.55) 55%,rgba(212,212,210,0) 100%)"></div>
<div class="a" style="left:334px;top:0;width:1800px;height:39px;background:#FDF6E3"></div>
<div class="t" style="left:368.20px;top:-3.10px;font-size:26.50px;line-height:40px;color:#6F6F6B;transform:scaleX(0.9140);">assets</div>
<div class="t" style="left:519.30px;top:-3.20px;font-size:26.50px;line-height:40px;color:#6F6F6B;transform:scaleX(0.9171);">style.css</div>
<div class="t" style="left:688.00px;top:-3.30px;font-size:26.50px;line-height:40px;color:#6F6F6B;transform:scaleX(1.0227);">.header-title</div>
<svg width="2134" height="40"><g fill="none" stroke="#6F6F6B" stroke-width="1.7">
<path d="M451 7.2 L461 16.7 L451 26.2"/><path d="M626.2 7.2 L636.2 16.7 L626.2 26.2"/></g>
<g fill="#648CA5" transform="translate(478.50 2.25)"><path d="M11.1 4.05 L14.5 4.05 L10.8 22.8 L7.3 22.8 Z"/><path d="M18.4 4.05 L21.9 4.05 L17.9 22.8 L14.5 22.8 Z"/><path d="M6.4 9.1 L24 9.1 L23.6 11.8 L6 11.8 Z"/><path d="M5.4 15 L22.9 15 L22.5 17.7 L5 17.7 Z"/></g>
<g fill="none" stroke="#C87D14" stroke-width="1.8" stroke-linejoin="round">
<path d="M650.2 9.85 L658.3 2.1 L662.05 5.8 L654.0 13.9 Z"/>
<path d="M658.2 10.4 L658.2 24.3 L668.9 24.3"/><path d="M658.2 13.9 L669.5 13.9"/>
<path d="M668.7 15.25 L674.1 10.2 L676.6 12.7 L671.2 17.95 Z"/>
<path d="M668.5 25.9 L673.9 20.85 L676.6 23.4 L671.2 28.6 Z"/>
</g></svg>
<div class="a" style="left:0;top:1827px;width:2134px;height:4px;background:#EEE8D5"></div>
</body></html>
